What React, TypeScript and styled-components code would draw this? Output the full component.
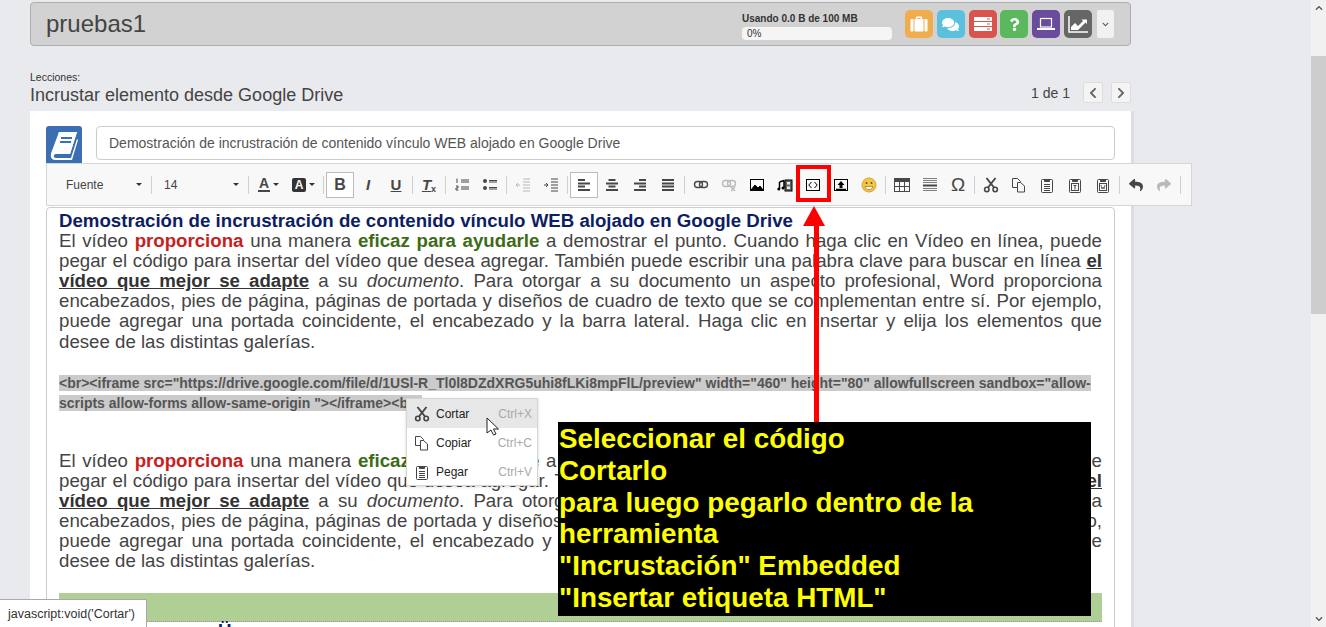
import React from 'react'
import styled, { createGlobalStyle } from 'styled-components'
import { FaComments, FaQuestion, FaChevronDown, FaChevronLeft, FaChevronRight, FaReply, FaShare } from 'react-icons/fa'

const GlobalStyle = createGlobalStyle`
  html, body { margin: 0; padding: 0; height: 100%; overflow: hidden; }
  body { background: #e9eaee; font-family: "Liberation Sans", Arial, sans-serif; color: #333; }
`

const Shell = styled.div`
  display: flex;
  height: 627px;
  overflow: hidden;
  position: relative;
`

const Main = styled.div`
  flex: 1;
  min-width: 0;
  padding: 2px 180px 0 30px;
`

const ScrollBar = styled.div`
  width: 15px;
  background: #f1f1f1;
  display: flex;
  flex-direction: column;
  align-items: center;
  justify-content: space-between;
  color: #505050;
  font-size: 8px;
  padding: 4px 0;
  box-sizing: border-box;
  position: relative;
`

const ScrollThumb = styled.div`
  position: absolute;
  top: 56px;
  left: 0;
  right: 0;
  height: 258px;
  background: #cdcdcd;
`

const UpChevron = styled(FaChevronDown)`
  transform: rotate(180deg);
`

const TopBar = styled.div`
  height: 44px;
  box-sizing: border-box;
  background: #d2d2d2;
  border: 1px solid #aeaeae;
  border-radius: 4px;
  display: flex;
  align-items: center;
  padding: 0 16px 0 15px;
`

const CourseTitle = styled.div`
  flex: 1;
  font-size: 24px;
  color: #444;
`

const Usage = styled.div`
  width: 150px;
  margin-right: 13px;
  padding-top: 4px;
`

const UsageLabel = styled.div`
  font-size: 10px;
  font-weight: bold;
  color: #333;
  line-height: 11px;
`

const UsageTrack = styled.div`
  margin-top: 3px;
  height: 13px;
  border-radius: 4px;
  background: #f5f5f5;
  font-size: 10px;
  line-height: 13px;
  padding-left: 5px;
  color: #333;
`

const IconTiles = styled.div`
  display: flex;
  gap: 3.8px;
`

const Tile = styled.div<{ $bg: string; $size?: number }>`
  width: 28px;
  height: 28px;
  border-radius: 5px;
  background: ${(p) => p.$bg};
  color: #fff;
  display: flex;
  align-items: center;
  justify-content: center;
  font-size: ${(p) => p.$size ?? 17}px;
`

const MoreBtn = styled.div`
  width: 17px;
  height: 28px;
  margin-left: 5px;
  background: #f1f1f1;
  border-radius: 2px;
  color: #555;
  display: flex;
  align-items: center;
  justify-content: center;
  font-size: 7px;
`

const LessonRow = styled.div`
  display: flex;
  align-items: flex-end;
  justify-content: space-between;
  height: 60px;
`

const LessonLabel = styled.div`
  font-size: 10.5px;
  color: #333;
  line-height: 12px;
`

const LessonName = styled.div`
  font-size: 18px;
  color: #444;
  line-height: 22px;
  margin-top: 1px;
`

const Pager = styled.div`
  display: flex;
  align-items: center;
  font-size: 14px;
  color: #444;
  padding-bottom: 3px;
`

const PagerBtn = styled.div`
  width: 20px;
  height: 21px;
  background: #f4f4f4;
  border: 1px solid #ddd;
  box-sizing: border-box;
  border-radius: 2px;
  color: #666;
  display: flex;
  align-items: center;
  justify-content: center;
  font-size: 12px;
  margin-left: 8px;
  &:first-of-type { margin-left: 13px; }
`

const Card = styled.div`
  margin-top: 5px;
  background: #fff;
  border-right: 3px solid #dcdde1;
  margin-right: -3px;
  padding: 15px 16px 0;
  height: 520px;
  box-sizing: border-box;
`

const TitleRow = styled.div`
  display: flex;
  gap: 14px;
  height: 37px;
`

const BookTile = styled.div`
  width: 36px;
  height: 37px;
  border-radius: 3px 3px 0 0;
  background: #3a70b2;
  display: flex;
  align-items: center;
  justify-content: center;
`

const TitleInput = styled.div`
  flex: 1;
  height: 34px;
  box-sizing: border-box;
  border: 1px solid #ccc;
  border-radius: 4px;
  padding: 0 12px;
  font-size: 14px;
  line-height: 32px;
  color: #555;
`

const Toolbar = styled.div`
  width: 1146px;
  height: 43px;
  box-sizing: border-box;
  background: #f8f8f8;
  border: 1px solid #d6d6d6;
  display: flex;
  align-items: center;
  padding-left: 6px;
  color: #474747;
`

const Combo = styled.div<{ $w: number; $pad: number }>`
  width: ${(p) => p.$w}px;
  box-sizing: border-box;
  padding: 0 7px 0 ${(p) => p.$pad}px;
  display: flex;
  justify-content: space-between;
  align-items: center;
  font-size: 12px;
  color: #444;
  flex: none;
`

const Caret = styled.span`
  width: 0;
  height: 0;
  border-left: 3px solid transparent;
  border-right: 3px solid transparent;
  border-top: 3px solid #333;
`

const Sep = styled.span`
  width: 1px;
  height: 18px;
  background: #cfcfcf;
  margin: 0 2px;
  flex: none;
`

const ToolBtn = styled.span<{ $on?: boolean; $w?: number; $off?: boolean }>`
  width: ${(p) => p.$w ?? 28}px;
  height: 26px;
  box-sizing: border-box;
  flex: none;
  gap: 3px;
  border: 1px solid ${(p) => (p.$on ? '#bcbcbc' : 'transparent')};
  background: ${(p) => (p.$on ? '#fff' : 'transparent')};
  display: inline-flex;
  align-items: center;
  justify-content: center;
  opacity: ${(p) => (p.$off ? 0.35 : 1)};
  font-size: 14px;
`

const ColorGlyph = styled.span`
  font-weight: bold;
  font-size: 14px;
  line-height: 13px;
  border-bottom: 2px solid #474747;
  padding: 0 1px;
`

const FillGlyph = styled.span`
  font-weight: bold;
  font-size: 12px;
  line-height: 14px;
  width: 14px;
  text-align: center;
  border-radius: 2px;
  background: #333;
  color: #f8f8f8;
`

const BoldGlyph = styled.span`
  font-weight: bold;
  font-size: 16px;
`

const ItalicGlyph = styled.span`
  font-weight: bold;
  font-style: italic;
  font-size: 15px;
`

const UnderGlyph = styled.span`
  font-weight: bold;
  text-decoration: underline;
  font-size: 15px;
`

const ClearGlyph = styled.span`
  font-weight: bold;
  font-style: italic;
  font-size: 15px;
  text-decoration: underline;
  & > sub {
    font-size: 9px;
    font-style: normal;
    display: inline-block;
    vertical-align: -2px;
    line-height: 0;
  }
`

const OmegaGlyph = styled.span`
  font-size: 19px;
  line-height: 20px;
`

const Editor = styled.div`
  margin-top: 1px;
  height: 430px;
  box-sizing: border-box;
  border: 1px solid #ccc;
  border-radius: 4px 4px 0 0;
  padding: 3px 12px 0;
  font-size: 18.67px;
  line-height: 20.1px;
  color: #444;
  overflow: hidden;
`

const Para = styled.p`
  margin: 0;
  text-align: justify;
`

const DocTitle = styled.div`
  font-weight: bold;
  color: #0d1e63;
`

const Red = styled.b`
  color: #c81e1e;
`

const Green = styled.b`
  color: #3d6b16;
`

const Dark = styled.b`
  color: #333;
  text-decoration: underline;
`

const Code = styled.p`
  margin: 21px 0 38px;
  font-size: 14px;
  font-weight: bold;
  color: #555;
  line-height: 20px;
`

const Mark = styled.span`
  background: #cbcbcb;
`

const GreenBand = styled.div`
  margin-top: 22px;
  height: 29px;
  box-sizing: border-box;
  background: #b0cf95;
  border-bottom: 1px dotted #999;
`

const NextHeading = styled.div`
  padding-left: 159px;
  font-weight: bold;
  color: #0d1e63;
  margin-top: -1px;
`

const ContextMenu = styled.div`
  position: absolute;
  left: 406px;
  top: 398px;
  width: 132px;
  height: 88px;
  box-sizing: border-box;
  background: #fff;
  border: 1px solid #d5d5d5;
  box-shadow: 0 1px 3px rgba(0, 0, 0, 0.15);
  font-size: 12px;
  color: #222;
`

const MenuItem = styled.div<{ $hover?: boolean }>`
  height: 29px;
  display: flex;
  align-items: center;
  padding-right: 5px;
  background: ${(p) => (p.$hover ? '#e7e7e7' : 'transparent')};
`

const MenuIcon = styled.span`
  width: 29px;
  display: flex;
  justify-content: center;
  color: #444;
`

const MenuLabel = styled.span`
  flex: 1;
`

const MenuKey = styled.span`
  color: #aaa;
`

const NoteBox = styled.div`
  position: absolute;
  left: 558px;
  top: 422px;
  width: 533px;
  height: 194px;
  background: #000;
  color: #ff0;
  font-size: 27.8px;
  font-weight: bold;
  line-height: 31.8px;
  padding: 1px 0 0 1px;
  box-sizing: border-box;
`

const Highlight = styled.div`
  position: absolute;
  left: 796px;
  top: 165px;
  width: 35px;
  height: 37px;
  box-sizing: border-box;
  border: 4px solid #f00;
`

const Arrow = styled.svg`
  position: absolute;
  left: 802px;
  top: 206px;
`

const StatusTip = styled.div`
  position: absolute;
  left: 0;
  top: 599px;
  width: 147px;
  height: 28px;
  box-sizing: border-box;
  background: #fff;
  border: 1px solid #aaa;
  border-left: none;
  border-bottom: none;
  font-size: 12.5px;
  line-height: 28px;
  padding-left: 8px;
  color: #333;
`

const Cursor = styled.svg`
  position: absolute;
  left: 486px;
  top: 417px;
`

const Icon: React.FC<{ children: React.ReactNode; size?: number }> = ({ children, size = 16 }) => (
  <svg width={size} height={size} viewBox="0 0 16 16" fill="none" stroke="currentColor" strokeWidth="1">
    {children}
  </svg>
)

const Scissors: React.FC<{ size?: number }> = ({ size = 16 }) => (
  <Icon size={size}>
    <circle cx="3.8" cy="12.5" r="2.2" strokeWidth="1.6" />
    <circle cx="12.2" cy="12.5" r="2.2" strokeWidth="1.6" />
    <path d="M5 10.500L12.500 1M11 10.500L3.500 1" strokeWidth="1.9" />
  </Icon>
)

const CopyIcon: React.FC<{ fill: string }> = ({ fill }) => (
  <Icon>
    <path d="M1.500 1.500h5l3 3v6h-8z" fill={fill} />
    <path d="M6.500 5.500h3l4 3.500v6h-7z" fill={fill} />
  </Icon>
)

const PasteIcon: React.FC<{ children: React.ReactNode }> = ({ children }) => (
  <Icon>
    <rect x="2.500" y="2.500" width="11" height="13" rx="1" />
    <path d="M5.500 2.500h5v2h-5z" fill="currentColor" />
    {children}
  </Icon>
)

const LinkIcon: React.FC = () => (
  <Icon>
    <rect x="1.500" y="4.500" width="8" height="6" rx="3" strokeWidth="1.400" />
    <rect x="6.500" y="4.500" width="8" height="6" rx="3" strokeWidth="1.400" />
  </Icon>
)

const paragraph = (
  <>
    El vídeo <Red>proporciona</Red> una manera <Green>eficaz para ayudarle</Green> a demostrar el punto. Cuando haga clic en Vídeo en línea, puede pegar el código para insertar del vídeo que desea agregar. También puede escribir una palabra clave para buscar en línea <Dark>el vídeo que mejor se adapte</Dark> a su <i>documento</i>. Para otorgar a su documento un aspecto profesional, Word proporciona encabezados, pies de página, páginas de portada y diseños de cuadro de texto que se complementan entre sí. Por ejemplo, puede agregar una portada coincidente, el encabezado y la barra lateral. Haga clic en Insertar y elija los elementos que desee de las distintas galerías.
  </>
)

const App: React.FC = () => {
  return (
    <Shell>
      <GlobalStyle />
      <Main>
        <TopBar>
          <CourseTitle>pruebas1</CourseTitle>
          <Usage>
            <UsageLabel>Usando 0.0 B de 100 MB</UsageLabel>
            <UsageTrack>0%</UsageTrack>
          </Usage>
          <IconTiles>
            <Tile $bg="#f0ad4e">
              <svg width="18" height="16" viewBox="0 0 18 16" fill="#fff">
                <path d="M6 3V1.500C6 .8 6.500.5 7 .5h4c.5 0 1 .3 1 1V3h-1.300V2H7.300v1z" />
                <rect x="0.500" y="3" width="3" height="12.500" rx="1" />
                <rect x="4.500" y="3" width="9" height="12.500" />
                <rect x="14.500" y="3" width="3" height="12.500" rx="1" />
              </svg>
            </Tile>
            <Tile $bg="#5bc0de"><FaComments /></Tile>
            <Tile $bg="#d9534f">
              <svg width="18" height="14" viewBox="0 0 18 14" fill="#fff">
                <rect y="0" width="18" height="4" />
                <rect y="5" width="18" height="4" />
                <rect y="10" width="18" height="4" />
                <path d="M13 1.500h3v1h-3zM13 6.500h3v1h-3zM13 11.500h3v1h-3z" fill="#d9534f" />
              </svg>
            </Tile>
            <Tile $bg="#5cb85c" $size={13}><FaQuestion /></Tile>
            <Tile $bg="#6a4c9c">
              <svg width="18" height="14" viewBox="0 0 18 14" fill="none" stroke="#fff">
                <rect x="3.500" y="1.500" width="11" height="8.500" strokeWidth="1.200" />
                <path d="M0 12h18" strokeWidth="2" />
              </svg>
            </Tile>
            <Tile $bg="#666">
              <svg width="20" height="17" viewBox="0 0 20 17" fill="none">
                <path d="M1 0v16h19" stroke="#fff" strokeWidth="1.500" />
                <path d="M3 14V11l4-4 3 3 5-5-1.500-1.500H19V8l-1.500-1.500L10 14z" fill="#fff" />
              </svg>
            </Tile>
          </IconTiles>
          <MoreBtn><FaChevronDown /></MoreBtn>
        </TopBar>
        <LessonRow>
          <div>
            <LessonLabel>Lecciones:</LessonLabel>
            <LessonName>Incrustar elemento desde Google Drive</LessonName>
          </div>
          <Pager>
            1 de 1
            <PagerBtn><FaChevronLeft /></PagerBtn>
            <PagerBtn><FaChevronRight /></PagerBtn>
          </Pager>
        </LessonRow>
        <Card>
          <TitleRow>
            <BookTile>
              <svg width="29" height="30" viewBox="0 0 29 30" fill="none">
                <path d="M9 2h18L20 24H6c-3 0-3 4 0 4h15l6-19 1 1-6 20H5c-4 0-5-4-3.500-8z" fill="#fff" />
                <path d="M9 2h18l-7 22H3z" fill="#fff" />
                <path d="M11 8h11M10 12h11" stroke="#3a70b2" strokeWidth="1.800" />
              </svg>
            </BookTile>
            <TitleInput>Demostración de incrustración de contenido vínculo WEB alojado en Google Drive</TitleInput>
          </TitleRow>
          <Toolbar>
            <Combo $w={96} $pad={13}>Fuente<Caret /></Combo>
            <Sep />
            <Combo $w={92} $pad={10}>14<Caret /></Combo>
            <Sep />
            <ToolBtn $w={35}><ColorGlyph>A</ColorGlyph><Caret /></ToolBtn>
            <ToolBtn $w={35}><FillGlyph>A</FillGlyph><Caret /></ToolBtn>
            <Sep />
            <ToolBtn $on><BoldGlyph>B</BoldGlyph></ToolBtn>
            <ToolBtn><ItalicGlyph>I</ItalicGlyph></ToolBtn>
            <ToolBtn><UnderGlyph>U</UnderGlyph></ToolBtn>
            <Sep />
            <ToolBtn><ClearGlyph>T<sub>x</sub></ClearGlyph></ToolBtn>
            <Sep />
            <ToolBtn><Icon><path d="M7 3h8M7 5h8M7 10h8M7 12h8M3 1.500V6M2 9h2v2H2v2h2.500" /></Icon></ToolBtn>
            <ToolBtn><Icon><path d="M7 3.500h8M7 5h8M7 10.500h8M7 12h8" /><circle cx="3" cy="4" r="2" fill="currentColor" stroke="none" /><circle cx="3" cy="11" r="2" fill="currentColor" stroke="none" /></Icon></ToolBtn>
            <Sep />
            <ToolBtn $off><Icon><path d="M8 2h7M8 5h7M8 8h7M8 11h7M8 14h7M1 8h4M3 6l-2 2 2 2" /></Icon></ToolBtn>
            <ToolBtn><Icon><path d="M8 2h7M8 5h7M8 8h7M8 11h7M8 14h7M1 8h4M3 6l2 2-2 2" /></Icon></ToolBtn>
            <Sep />
            <ToolBtn $on><Icon><path d="M2 3h7M2 6.500h12M2 9.500h7M2 13h12" strokeWidth="1.800" /></Icon></ToolBtn>
            <ToolBtn><Icon><path d="M4.500 3h7M2 6.500h12M4.500 9.500h7M2 13h12" strokeWidth="1.800" /></Icon></ToolBtn>
            <ToolBtn><Icon><path d="M7 3h7M2 6.500h12M7 9.500h7M2 13h12" strokeWidth="1.800" /></Icon></ToolBtn>
            <ToolBtn><Icon><path d="M2 3h12M2 6.500h12M2 9.500h12M2 13h12" strokeWidth="1.800" /></Icon></ToolBtn>
            <Sep />
            <ToolBtn><LinkIcon /></ToolBtn>
            <ToolBtn $off><Icon><rect x="1.500" y="3.500" width="8" height="6" rx="3" strokeWidth="1.400" /><rect x="6.500" y="3.500" width="8" height="6" rx="3" strokeWidth="1.400" /><path d="M10 10l4 4M14 10l-4 4" strokeWidth="1.400" /></Icon></ToolBtn>
            <ToolBtn><Icon><rect x="1.500" y="2.500" width="13" height="11" stroke="#000" /><path d="M2 13l4-5 3 3 2-2 3 4z" fill="#000" stroke="#000" /></Icon></ToolBtn>
            <ToolBtn><Icon><rect x="8" y="3" width="7" height="11" fill="#666" stroke="#000" /><path d="M10 5h3v2.500h-3zM10 9.500h3V12h-3z" fill="#eee" stroke="none" /><path d="M2.500 5V12M7 3.500V11M2.500 5L7 3.500" strokeWidth="1.500" stroke="#000" /><circle cx="1.800" cy="12" r="1.500" fill="#000" stroke="none" /><circle cx="6" cy="11" r="1.500" fill="#000" stroke="none" /></Icon></ToolBtn>
            <ToolBtn><Icon><rect x="1.500" y="2.500" width="13" height="11" stroke="#000" /><path d="M6.500 5L3.800 8l2.700 3M9.500 5l2.700 3-2.700 3" stroke="#000" /></Icon></ToolBtn>
            <ToolBtn><Icon><rect x="1.500" y="2.500" width="13" height="11" stroke="#000" /><path d="M8 4l3.500 4H9.500v3h-3V8H4.500z" fill="#000" stroke="none" /><path d="M3 12.500h10" stroke="#000" strokeWidth="1.500" /></Icon></ToolBtn>
            <ToolBtn>
              <svg width="16" height="16" viewBox="0 0 16 16">
                <circle cx="8" cy="8" r="7" fill="#f3c64a" stroke="#d9a32c" />
                <path d="M4 9.500h8c-.5 2-2 3-4 3s-3.500-1-4-3z" fill="#fff" stroke="#8a5a14" strokeWidth=".6" />
                <circle cx="5.500" cy="6" r="1" fill="#7a4d10" />
                <circle cx="10.500" cy="6" r="1" fill="#7a4d10" />
              </svg>
            </ToolBtn>
            <Sep />
            <ToolBtn><Icon><rect x="0.500" y="1.500" width="15" height="3" fill="currentColor" /><rect x="0.500" y="1.500" width="15" height="13" /><path d="M.5 9.500h15M5.500 4v10.500M10.500 4v10.500" /></Icon></ToolBtn>
            <ToolBtn><Icon><path d="M1 1.500h14M1 3.500h14M1 5.500h14M1 11.500h14M1 13.500h14" strokeWidth=".7" /><path d="M1 8.500h14" strokeWidth="2" /></Icon></ToolBtn>
            <ToolBtn><OmegaGlyph>Ω</OmegaGlyph></ToolBtn>
            <Sep />
            <ToolBtn><Scissors /></ToolBtn>
            <ToolBtn><CopyIcon fill="#f8f8f8" /></ToolBtn>
            <ToolBtn><PasteIcon><path d="M5 7.500h6M5 9.500h6M5 11.500h6M5 13.500h6" /></PasteIcon></ToolBtn>
            <ToolBtn><PasteIcon><rect x="4.500" y="6.500" width="7" height="7" /><path d="M6.500 8.500h3M8 8.500v4" /></PasteIcon></ToolBtn>
            <ToolBtn><PasteIcon><rect x="4.500" y="6.500" width="7" height="7" /><path d="M6 8l1 4 1-2 1 2 1-4" strokeWidth=".8" /></PasteIcon></ToolBtn>
            <Sep />
            <ToolBtn><FaReply /></ToolBtn>
            <ToolBtn $off><FaShare /></ToolBtn>
            <Sep />
          </Toolbar>
          <Editor>
            <DocTitle>Demostración de incrustración de contenido vínculo WEB alojado en Google Drive</DocTitle>
            <Para>{paragraph}</Para>
            <Code>
              <Mark>&lt;br&gt;&lt;iframe src="https://drive.google.com/file/d/1USl-R_Tl0l8DZdXRG5uhi8fLKi8mpFlL/preview" width="460" height="80" allowfullscreen sandbox="allow-scripts allow-forms allow-same-origin "&gt;&lt;/iframe&gt;&lt;br&gt;</Mark>
            </Code>
            <Para>{paragraph}</Para>
            <GreenBand />
            <NextHeading>Ü</NextHeading>
          </Editor>
        </Card>
      </Main>
      <ScrollBar>
        <UpChevron />
        <ScrollThumb />
        <FaChevronDown />
      </ScrollBar>

      <Highlight />
      <Arrow width="24" height="216" viewBox="0 0 24 216">
        <path d="M12 0L23 20H17V216H12V20H1z" fill="#f00" />
      </Arrow>
      <NoteBox>
        Seleccionar el código<br />
        Cortarlo<br />
        para luego pegarlo dentro de la<br />
        herramienta<br />
        "Incrustación" Embedded<br />
        "Insertar etiqueta HTML"
      </NoteBox>
      <ContextMenu>
        <MenuItem $hover><MenuIcon><Scissors /></MenuIcon><MenuLabel>Cortar</MenuLabel><MenuKey>Ctrl+X</MenuKey></MenuItem>
        <MenuItem><MenuIcon><CopyIcon fill="#fff" /></MenuIcon><MenuLabel>Copiar</MenuLabel><MenuKey>Ctrl+C</MenuKey></MenuItem>
        <MenuItem><MenuIcon><PasteIcon><path d="M5 7.500h6M5 9.500h6M5 11.500h6M5 13.500h6" /></PasteIcon></MenuIcon><MenuLabel>Pegar</MenuLabel><MenuKey>Ctrl+V</MenuKey></MenuItem>
      </ContextMenu>
      <Cursor width="14" height="20" viewBox="0 0 14 20">
        <path d="M1 1v15l4-3 2.500 5 2.500-1-2.500-5h5z" fill="#fff" stroke="#222" />
      </Cursor>
      <StatusTip>javascript:void('Cortar')</StatusTip>
    </Shell>
  )
}

export default App
